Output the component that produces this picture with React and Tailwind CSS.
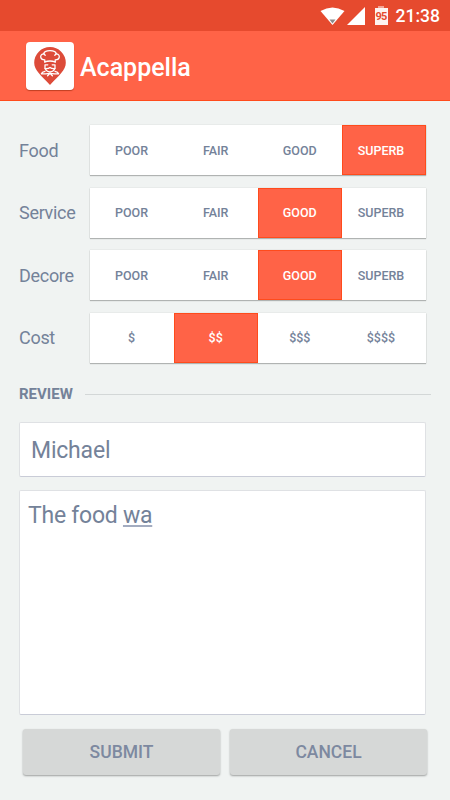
const ratings = [
  { name: 'Food', options: ['POOR', 'FAIR', 'GOOD', 'SUPERB'], selected: 3 },
  { name: 'Service', options: ['POOR', 'FAIR', 'GOOD', 'SUPERB'], selected: 2 },
  { name: 'Decore', options: ['POOR', 'FAIR', 'GOOD', 'SUPERB'], selected: 2 },
  { name: 'Cost', options: ['$', '$$', '$$$', '$$$$'], selected: 1 },
];

function StatusBar() {
  return (
    <div className="flex h-[31px] items-center justify-end bg-[#e64a2e] pr-[10px] text-white">
      <svg className="mr-[2px] h-[18px] w-[25px]" viewBox="0 0 25 18">
        <path d="M0.5 4 Q12.5 -3 24.5 4 L12.5 18 Z" fill="currentColor" />
        <path d="M9.5 12.5h6L12.5 16.5Z" fill="#8b8b8b" />
      </svg>
      <svg className="mr-[10px] h-[18px] w-[18px]" viewBox="0 0 18 18">
        <path d="M18 0V18H0Z" fill="currentColor" />
      </svg>
      <div className="mr-[8px] flex flex-col items-center">
        <div className="h-[2px] w-[6px] bg-[#f3a597]" />
        <div className="flex h-[17px] w-[13px] items-center justify-center bg-[#fdf3f1] text-[11px] font-bold leading-none tracking-[-0.7px] text-[#e64a2e]">
          95
        </div>
      </div>
      <span className="pt-[2px] text-[17.5px] font-medium leading-none">21:38</span>
    </div>
  );
}

function Logo() {
  return (
    <div className="flex h-12 w-12 items-center justify-center rounded-[4px] bg-white shadow-[0_1px_1px_rgba(150,40,10,0.6)]">
      <svg className="h-[38px] w-8" viewBox="0 0 32 38">
        <path d="M16 0A15.8 15.8 0 0 1 31.8 15.8C31.8 23 25 28.5 16 38C7 28.5 .2 23 .2 15.8A15.8 15.8 0 0 1 16 0Z" fill="#dd4b39" />
        <g fill="none" stroke="#fff" strokeWidth="1.3" strokeLinecap="round" strokeLinejoin="round">
          <path d="M10.8 15.2V12.8C5.6 12.8 5.4 7 9.8 6.8C10.2 2.6 21.8 2.6 22.2 6.8C26.6 7 26.4 12.8 21.2 12.8V15.2" />
          <path d="M10.8 14.8Q16 13.2 21.2 14.8M11.2 8.2L9.8 6.8M20.8 8.2L22.2 6.8" />
          <path d="M11 17.8H13.8M18.2 17.8H21M11 17.8V21.5M21 17.8V21.5" />
          <path d="M11.2 21.6Q14.5 21.8 16 20.4Q17.5 21.8 20.8 21.6Q19.5 25 16 25Q12.5 25 11.2 21.6Z" />
          <path d="M7.4 26.8H11.5L16 26.3L20.5 26.8H24.6M7.4 26.8Q8 25 11 24.4M24.6 26.8Q24 25 21 24.4M16 26.3L13.6 28.8M16 26.3L18.4 28.8" />
        </g>
      </svg>
    </div>
  );
}

function RatingRow({ name, options, selected }) {
  return (
    <div className="flex h-[50px] items-center">
      <div className="w-[70.5px] text-[18px] tracking-[-0.3px]">{name}</div>
      <div className="grid h-full w-[336.5px] grid-cols-4 bg-white shadow-[0_1px_1px_rgba(0,0,0,0.24),0_0_1px_rgba(0,0,0,0.2)]">
        {options.map((option, i) => (
          <div
            key={option}
            className={
              'flex items-center justify-center pt-[2px] text-[12.5px] font-medium ' +
              (i === selected ? 'border border-[#ff4b1c] bg-[#ff6347] text-white ' : '') +
              (i === 3 ? 'pr-[6px]' : '')
            }
          >
            {option}
          </div>
        ))}
      </div>
    </div>
  );
}

function ActionButton({ children }) {
  return (
    <button className="h-[46px] flex-1 rounded-[3px] bg-[#d6d8d7] pt-[2px] text-[17.5px] font-medium text-[#7d89a0] shadow-[0_1px_2px_rgba(0,0,0,0.35)]">
      {children}
    </button>
  );
}

export default function App() {
  return (
    <div className="h-[800px] w-[450px] overflow-hidden bg-[#f0f3f2] font-[Roboto,sans-serif] text-[#748299]">
      <StatusBar />
      <header className="flex h-[70px] items-center gap-[6px] border-b border-[#ff4b1c] bg-[#ff6347] pl-[26px]">
        <Logo />
        <h1 className="pt-[4px] text-[25px] font-medium text-white">Acappella</h1>
      </header>
      <main className="pl-[19px]">
        <section className="flex flex-col gap-[12.5px] pt-[24px]">
          {ratings.map((rating) => (
            <RatingRow key={rating.name} {...rating} />
          ))}
        </section>
        <div className="mt-[20.5px] flex h-[22px] items-center gap-3 pr-[19px]">
          <h2 className="text-[15px] font-bold">REVIEW</h2>
          <div className="h-px flex-1 bg-[#d3d7d7]" />
        </div>
        <div className="mt-[16.5px] flex h-[55px] w-[407px] items-center rounded-[2px] border border-[#dfe1e4] border-b-[#c9ccd7] bg-white pl-[11px] pt-[4px] text-[23px] tracking-[-0.2px]">
          Michael
        </div>
        <div className="mt-[13px] h-[225px] w-[407px] rounded-[2px] border border-[#dfe1e4] border-b-[#c9ccd7] bg-white pl-[8px] pt-[8px] text-[23px] tracking-[-0.25px]">
          The food <span className="underline decoration-[#a3acc0] decoration-2 underline-offset-[2px]">wa</span>
        </div>
        <div className="mt-[14px] flex w-[408px] gap-[10px] pl-[4px]">
          <ActionButton>SUBMIT</ActionButton>
          <ActionButton>CANCEL</ActionButton>
        </div>
      </main>
    </div>
  );
}
